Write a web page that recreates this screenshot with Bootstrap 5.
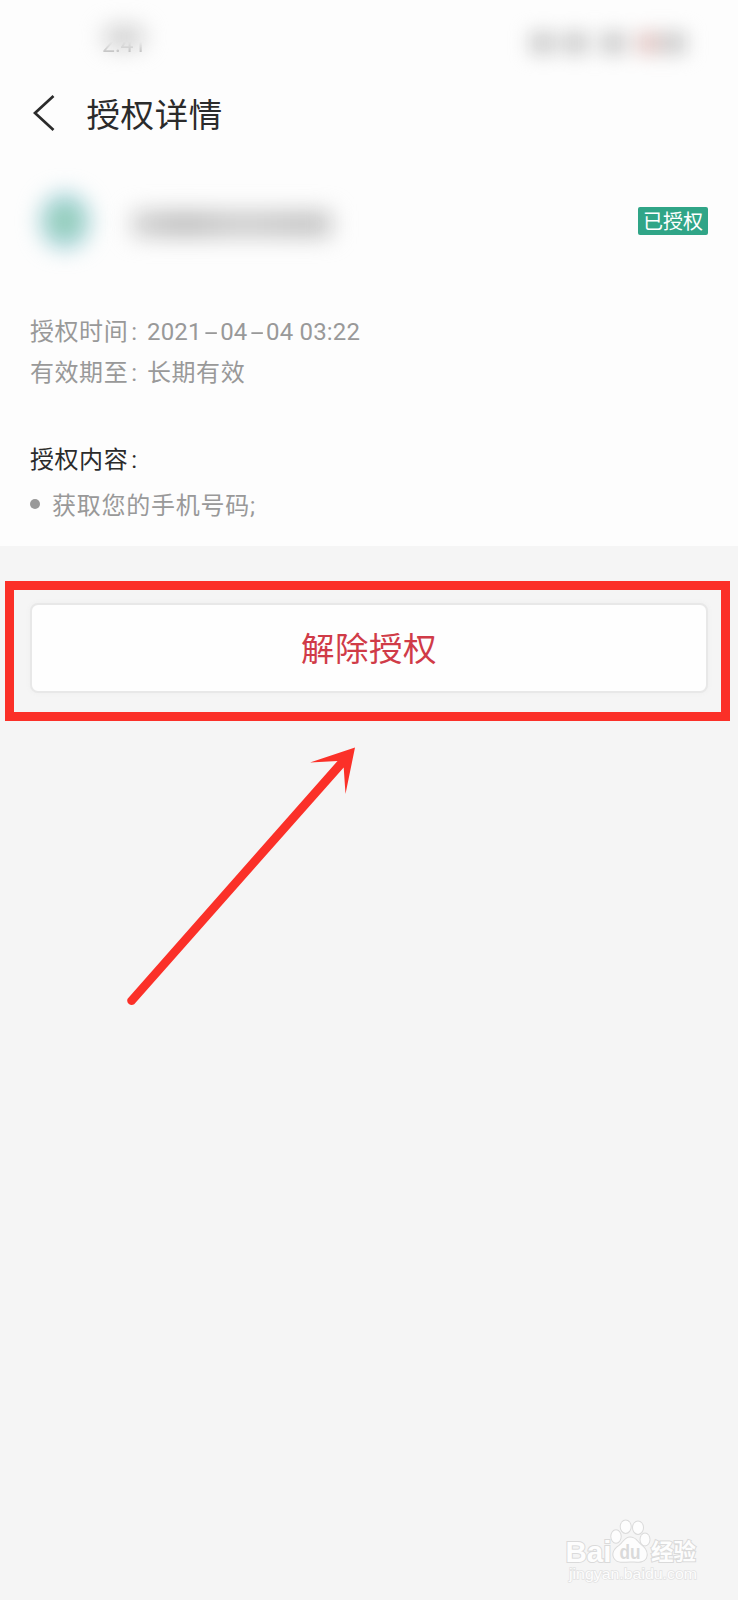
<!DOCTYPE html>
<html lang="zh-CN">
<head>
<meta charset="utf-8">
<meta name="viewport" content="width=device-width, initial-scale=1">
<title>授权详情</title>
<link href="https://cdn.jsdelivr.net/npm/bootstrap@5.3.0/dist/css/bootstrap.min.css" rel="stylesheet">
<style>
body{background:#f5f5f5;font-family:Roboto,"Noto Sans CJK SC",sans-serif;color:#2b2b2b}
.screen{width:738px;height:1600px}
.sheet{background:#fdfdfd;height:546px}
.statusbar{height:80px;padding:29px 50px 0 100px}
.clock{position:relative;width:50px;height:32px;font-size:23px;line-height:32px;color:#c0c0c0}
.clock span{display:block;padding-left:2px;-webkit-mask:linear-gradient(transparent 40%,#000 75%);mask:linear-gradient(transparent 40%,#000 75%)}
.clock::before{content:"";position:absolute;left:3px;top:-3px;width:42px;height:22px;border-radius:12px;background:#cfcfcf;filter:blur(11px)}
.indicators{filter:blur(9px);gap:6px;margin-right:1px;height:30px;padding-top:2px}
.indicators i{display:block;height:24px;width:27px;background:#d2d2d2}
.titlebar{height:68px;padding-left:33px}
.titlebar svg{margin-top:-2px}
.titlebar h1{font-size:33.5px;letter-spacing:.6px;line-height:44px;margin-left:31.5px;padding-top:3px;font-weight:400}
.account{height:146px;padding:0 30px 0 40px}
.avatar{width:50px;height:56px;border-radius:50%;background:radial-gradient(circle,#93cfaf 15%,#9fcfdd 65%);filter:blur(11px)}
.hidden-name{width:200px;height:26px;margin-left:42px;margin-top:6px;background:linear-gradient(90deg,#d2d2d2,#bdbdbd 25%,#cdcdcd 55%,#c2c2c2 90%,#ccc);filter:blur(11px)}
.state{width:70px;height:28px;border-radius:2px;background:#30a587;color:#fff;font-size:20px;line-height:31px;font-weight:400;padding:0 0 0 5px;text-align:left}
.facts{padding:18px 30px 0;font-size:24px;color:#999}
.line{height:40.5px;line-height:40.5px;letter-spacing:.55px}
.term{width:117px}
.term b,.scope .line b{font-weight:400;margin-left:3px}
.date{letter-spacing:.18px}
.dash{display:inline-block;width:18.5px;text-align:center;transform:scaleX(2)}
.scope{padding:47px 30px 0;font-size:24px}
.scope li{height:50px;line-height:50px;color:#999;letter-spacing:.75px}
.dot{width:10px;height:10px;border-radius:50%;background:#999;margin-right:12px;margin-top:-4px}
.frame{margin:35px 8px 0 5px;height:140px;border:9px solid #fb3028;padding:13px 13px 0 16px}
.revoke{height:90px;border:2px solid #e8e8e8;border-radius:8px;background:#fefefe;color:#d03b48;font-size:33.5px;letter-spacing:.5px;padding:5px 0 0 0;box-shadow:0 0 5px #eee}
.arrow{left:99.5px;top:730px}
.watermark{left:550px;top:1500px}
</style>
</head>
<body>
<main class="screen position-relative overflow-hidden">
  <section class="sheet">
    <div class="statusbar d-flex justify-content-between">
      <div class="clock"><span>2:41</span></div>
      <div class="indicators d-flex"><i></i><i></i><i style="margin-left:5px"></i><i style="background:#e6cecc;margin-left:3px"></i><i style="margin-left:-9px"></i></div>
    </div>
    <header class="titlebar d-flex align-items-center">
      <svg width="22" height="38" viewBox="0 0 22 38" fill="none" stroke="#2b2b2b" stroke-width="2.7"><path d="M20.5 2 2 19 20.5 36"/></svg>
      <h1 class="mb-0">授权详情</h1>
    </header>
    <div class="account d-flex align-items-center">
      <div class="avatar"></div>
      <div class="hidden-name"></div>
      <span class="state badge ms-auto">已授权</span>
    </div>
    <div class="facts">
      <div class="line d-flex"><span class="term">授权时间<b>:</b></span><span class="date">2021<span class="dash">-</span>04<span class="dash">-</span>04 03:22</span></div>
      <div class="line d-flex"><span class="term">有效期至<b>:</b></span><span>长期有效</span></div>
    </div>
    <div class="scope">
      <div class="line">授权内容<b>:</b></div>
      <ul class="list-unstyled mb-0"><li class="d-flex align-items-center"><span class="dot"></span>获取您的手机号码;</li></ul>
    </div>
  </section>
  <div class="frame">
    <button type="button" class="revoke btn w-100">解除授权</button>
  </div>
  <svg class="arrow position-absolute" width="280" height="290" viewBox="0 0 280 290" fill="#fb3028"><path d="M27.6 268.7 237.5 31 210 32.6 255 17.5 245.5 64 243.7 37.5 34.2 274.2A4.5 4.5 0 0 1 27.6 268.7Z"/></svg>
  <svg class="watermark position-absolute" width="188" height="100" viewBox="0 0 188 100" fill="#fdfdfd" stroke="#dadada" stroke-width="2" paint-order="stroke" font-family="Liberation Sans, sans-serif">
    <text x="15.5" y="61.5" font-size="30" font-weight="700" textLength="46" lengthAdjust="spacingAndGlyphs">Bai</text>
    <g stroke-width="2"><ellipse cx="66" cy="36.5" rx="4.7" ry="6.2"/><ellipse cx="75.7" cy="26.7" rx="5" ry="6.2"/><ellipse cx="88" cy="27.7" rx="5" ry="6.2"/><ellipse cx="95" cy="39.5" rx="4.5" ry="6"/>
    <path d="M80 37.5C75 37.5 73 43 69 46C63 50 62 55 65 59C68 63 74 61.5 80 61.5C87 61.5 93 63 96 58C98 53 96 49 91 45C87 42 86 37.5 80 37.5Z"/></g>
    <text x="69.5" y="59" font-size="20" font-weight="700" fill="#dadada" stroke="none" textLength="21" lengthAdjust="spacingAndGlyphs">du</text>
    <text x="101" y="60" font-size="22.5" font-weight="700" font-family="Noto Sans CJK SC, sans-serif">经验</text>
    <text x="19" y="79" font-size="15.5" stroke-width="1.4" stroke="#e2e2e2" textLength="128" lengthAdjust="spacingAndGlyphs">jingyan.baidu.com</text>
  </svg>
</main>
<script src="https://cdn.jsdelivr.net/npm/bootstrap@5.3.0/dist/js/bootstrap.bundle.min.js"></script>
</body>
</html>
